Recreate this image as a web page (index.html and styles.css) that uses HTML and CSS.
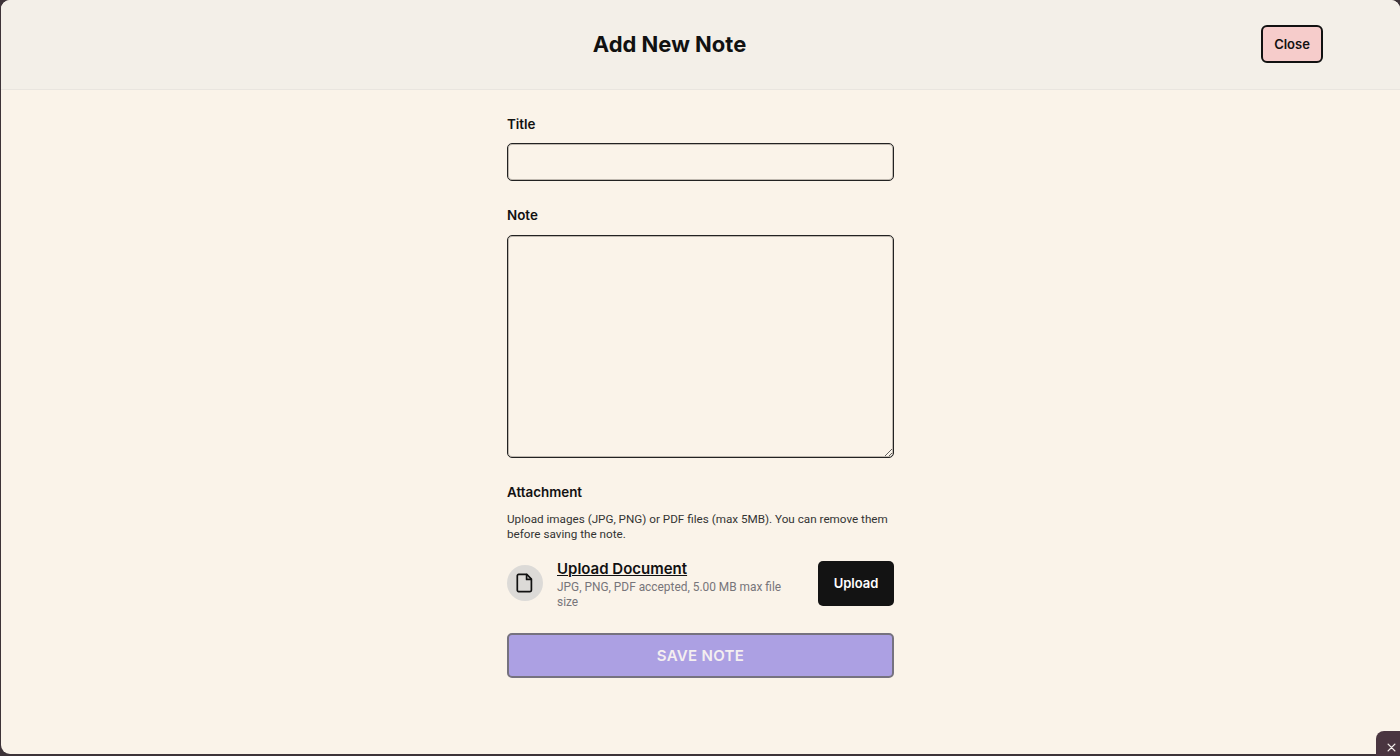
FILE: index.html
```html
<!DOCTYPE html>
<html lang="en">
<head>
<meta charset="utf-8">
<title>Add New Note</title>
<link rel="stylesheet" href="styles.css">
</head>
<body>
<div class="modal">
  <header class="modal-header">
    <h1 class="modal-title">Add New Note</h1>
    <button class="close-btn" type="button">Close</button>
  </header>
  <main class="modal-body">
    <form class="form">
      <div class="field field-title">
        <label class="label" for="t">Title</label>
        <input class="input" id="t" type="text">
      </div>
      <div class="field field-note">
        <label class="label" for="n">Note</label>
        <textarea class="textarea" id="n"></textarea>
      </div>
      <div class="attachment">
        <div class="label">Attachment</div>
        <p class="help">Upload images (JPG, PNG) or PDF files (max 5MB). You can remove them before saving the note.</p>
        <div class="upload-row">
          <div class="file-icon">
            <svg width="20" height="20" viewBox="0 0 20 20" fill="none" stroke="#111" stroke-width="1.7" stroke-linejoin="round" stroke-linecap="round"><path d="M3.6 1.4h8.2l4.6 4.7v11.2a1.3 1.3 0 0 1-1.3 1.3H3.6a1.3 1.3 0 0 1-1.3-1.3V2.7a1.3 1.3 0 0 1 1.3-1.3z"/><path d="M11.6 1.6v4.8h4.6"/></svg>
          </div>
          <div class="upload-text">
            <div class="upload-title">Upload Document</div>
            <div class="upload-sub">JPG, PNG, PDF accepted, 5.00 MB max file size</div>
          </div>
          <button class="upload-btn" type="button">Upload</button>
        </div>
      </div>
      <button class="save-btn" type="button">SAVE NOTE</button>
    </form>
  </main>
</div>
<button class="corner-x" type="button" aria-label="Dismiss">
  <svg width="9" height="9" viewBox="0 0 8 8" stroke="#f4eeea" stroke-width="1.2" stroke-linecap="round"><path d="M1 1l6 6M7 1L1 7"/></svg>
</button>
</body>
</html>
```
FILE: styles.css
```css
* { box-sizing: border-box; }
html, body { height: 100%; }
body {
  margin: 0;
  background: #3d3338;
  font-family: Inter, "Liberation Sans", sans-serif;
  color: #111;
  overflow: hidden;
  padding: 0 0 2px 1px;
}
.modal {
  height: 100%;
  background: #faf3e9;
  border-radius: 9px;
  display: flex;
  flex-direction: column;
  overflow: hidden;
}
.modal-header {
  height: 90px;
  flex: none;
  background: #f3efe8;
  border-bottom: 1px solid #e9e5df;
  display: flex;
  align-items: center;
  padding: 0 77px 2px 76px;
}
.modal-title {
  flex: 1;
  margin: 0;
  font-size: 22px;
  font-weight: 700;
  line-height: 32px;
  text-align: center;
  color: #111;
  padding-left: 1px;
}
.close-btn {
  width: 62px;
  height: 38px;
  background: #f6cccb;
  border: 2px solid #111;
  border-radius: 6px;
  font: 600 13px Inter, sans-serif;
  color: #111;
  padding: 0;
}
.modal-body { flex: 1; display: flex; justify-content: center; }
.form { width: 387px; padding-top: 25px; display: flex; flex-direction: column; }
.label { font-size: 13.4px; font-weight: 600; line-height: 18px; display: block; color: #111; }
.field-title { margin-bottom: 25px; }
.field-note { margin-bottom: 25px; }
.input, .textarea {
  display: block;
  width: 100%;
  margin-top: 10px;
  background: #faf3e9;
  border: 1px solid #222;
  box-shadow: inset 0 0 0 1px rgba(80, 75, 70, 0.35);
  border-radius: 5px;
  outline: none;
  font: 14px Inter, sans-serif;
}
.input { height: 38px; }
.textarea { height: 223px; margin-top: 11px; resize: vertical; }
.help { margin: 11px 0 0; font-family: Roboto, sans-serif; font-size: 11.7px; line-height: 15px; color: #333; }
.upload-row { display: flex; align-items: center; margin-top: 19px; height: 45px; }
.file-icon {
  width: 36px;
  height: 36px;
  border-radius: 50%;
  background: #dcdad7;
  display: flex;
  align-items: center;
  justify-content: center;
  flex: none;
  align-self: flex-start;
  margin-top: 4px;
}
.upload-text { flex: 1; margin: 1px 0 0 14px; padding-right: 24px; min-width: 0; }
.upload-title { font-size: 15px; font-weight: 600; line-height: 20px; text-decoration: underline; color: #111; }
.upload-sub { font-family: Roboto, sans-serif; font-size: 11.9px; line-height: 15px; color: #77757a; margin-top: 1px; }
.upload-btn {
  width: 76px;
  height: 45px;
  flex: none;
  background: #131313;
  color: #fff;
  border: 0;
  border-radius: 5px;
  font: 600 13px Inter, sans-serif;
  padding: 0 0 2px;
}
.save-btn {
  margin-top: 27px;
  height: 45px;
  width: 100%;
  background: #aca0e3;
  border: 2px solid #76727f;
  border-radius: 5px;
  color: #f4eff0;
  font: 600 15px Inter, sans-serif;
  letter-spacing: 0.3px;
  padding: 0;
}
.corner-x {
  position: absolute;
  right: 0;
  bottom: 0;
  width: 24px;
  height: 25px;
  background: #4a3540;
  border: 0;
  border-top-left-radius: 8px;
  display: flex;
  align-items: center;
  justify-content: center;
  padding: 7px 0 0 7px;
}
```
